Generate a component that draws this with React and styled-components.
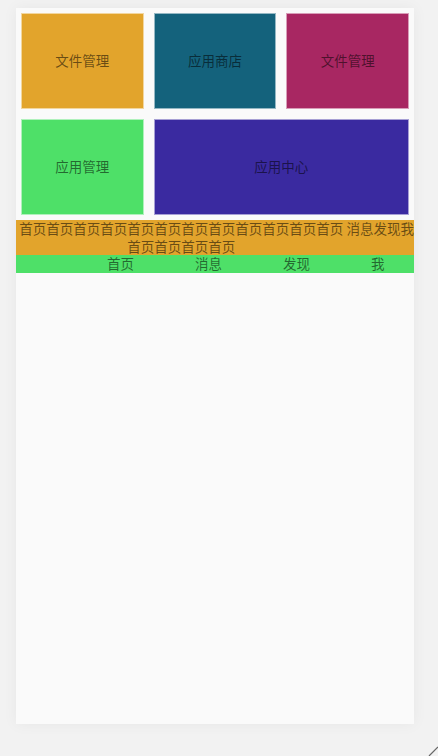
import React from "react";
import styled, { createGlobalStyle } from "styled-components";

const GlobalStyle = createGlobalStyle`
    html, body {
        margin: 0;
        padding: 0;
        background: #f2f2f2;
        font-family: "Noto Sans CJK SC", "Noto Sans", sans-serif;
    }
`;

const Page = styled.div`
    padding: 8px 24px 0 16px;
    height: 756px;
    box-sizing: border-box;
`;

const Phone = styled.div`
    width: 398px;
    height: 716px;
    background: #fafafa;
    box-shadow: 0 0 14px rgba(0, 0, 0, 0.05);
    font-size: 13.5px;
    line-height: 17.5px;
    color: rgba(0, 0, 0, 0.55);
`;

const Grid = styled.div`
    display: grid;
    grid-template-columns: repeat(3, 1fr);
    grid-auto-rows: 106px;
`;

const Tile = styled.div`
    margin: 5px;
    grid-column: span ${(p) => p.span || 1};
    background: ${(p) => p.bg};
    border: 1px solid rgba(255, 255, 255, 0.55);
    display: flex;
    align-items: center;
    justify-content: center;
`;

const TopBar = styled.div`
    display: flex;
    background: #e2a42c;
`;

const Long = styled.div`
    flex: 1 1 auto;
    text-align: center;
`;

const Item = styled.div`
    flex: 0 0 auto;
`;

const TabBar = styled.div`
    display: flex;
    gap: 61px;
    padding-left: 91px;
    background: #4ee068;
`;

const Grip = styled.svg`
    position: fixed;
    right: 0;
    bottom: 0;
`;

const tiles = [
    { label: "文件管理", bg: "#e2a42c" },
    { label: "应用商店", bg: "#14627c" },
    { label: "文件管理", bg: "#a82762" },
    { label: "应用管理", bg: "#4ee068" },
    { label: "应用中心", bg: "#3a2aa0", span: 2 },
];

function App() {
    return (
        <Page>
            <GlobalStyle />
            <Phone>
                <Grid>
                    {tiles.map((t, i) => (
                        <Tile key={i} bg={t.bg} span={t.span}>
                            {t.label}
                        </Tile>
                    ))}
                </Grid>
                <TopBar>
                    <Long>{"首页".repeat(16)}</Long>
                    <Item>消息</Item>
                    <Item>发现</Item>
                    <Item>我</Item>
                </TopBar>
                <TabBar>
                    <Item>首页</Item>
                    <Item>消息</Item>
                    <Item>发现</Item>
                    <Item>我</Item>
                </TabBar>
            </Phone>
            <Grip width="10" height="10" viewBox="0 0 10 10">
                <line x1="1" y1="10" x2="10" y2="1" stroke="#666" strokeWidth="1.2" />
            </Grip>
        </Page>
    );
}

export default App;
